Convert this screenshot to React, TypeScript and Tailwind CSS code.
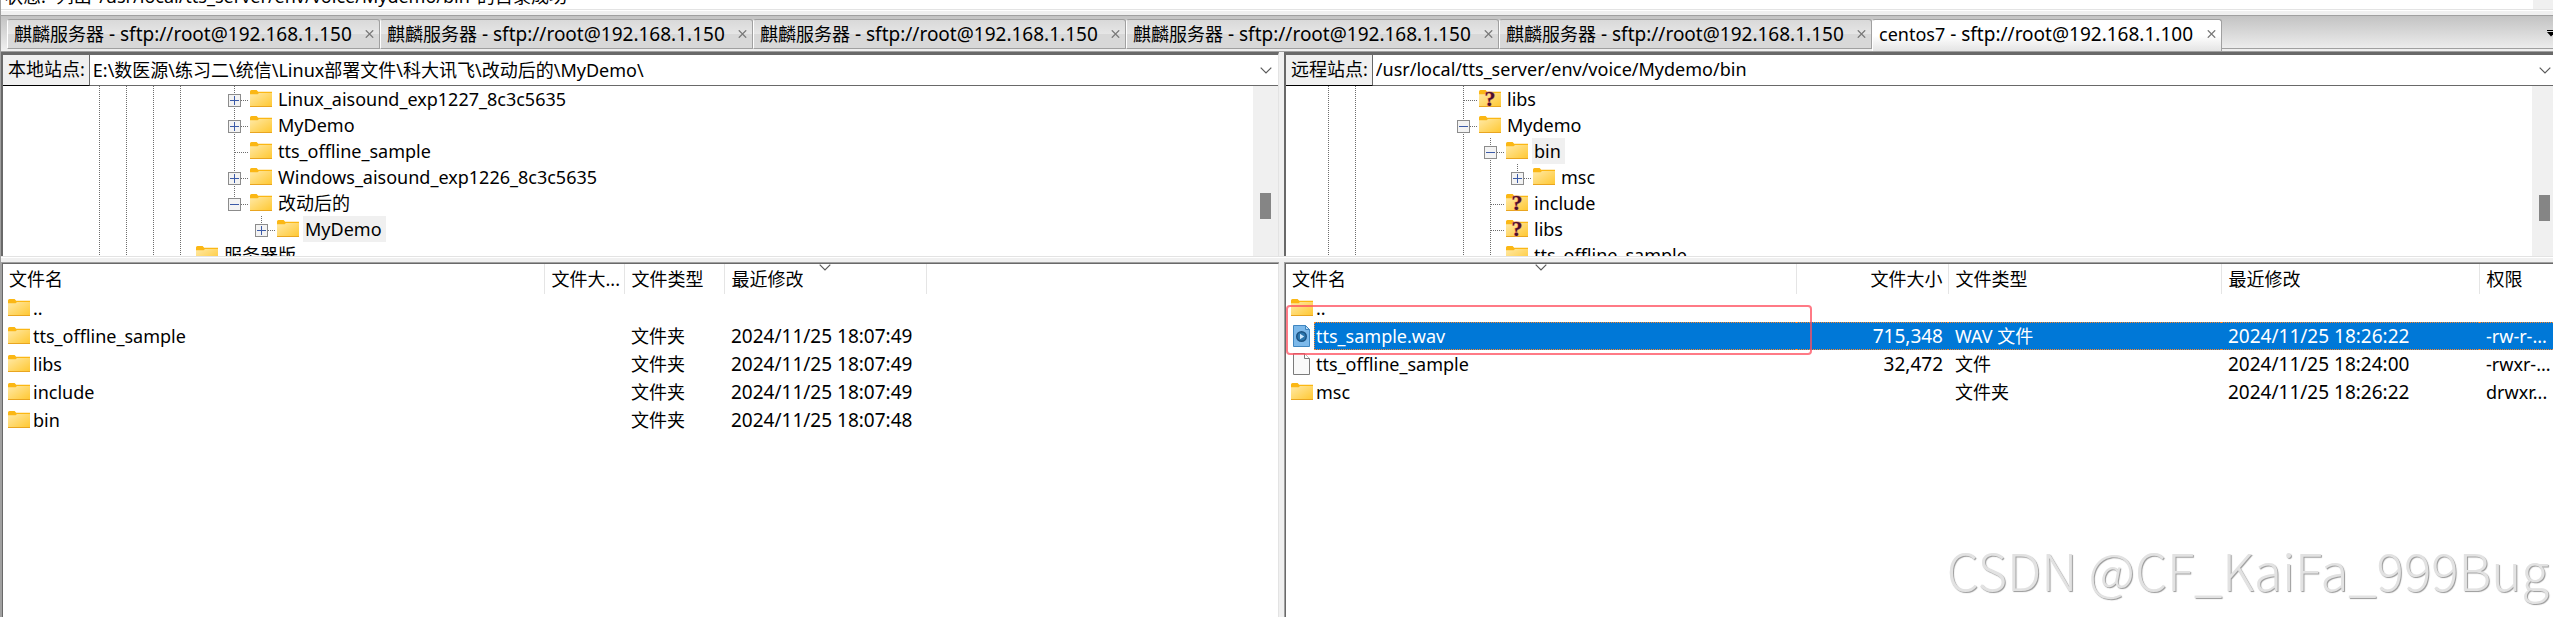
type NodeMark = "plus" | "minus" | "leaf";

interface TreeRow {
  // one character per indent level: "|" draws a guide line, "." leaves it empty
  guides: string;
  mark: NodeMark;
  name: string;
  last?: boolean;
  unknown?: boolean;
  selected?: boolean;
}

interface FileRow {
  icon: "folder" | "file" | "audio";
  name: string;
  size?: string;
  type?: string;
  modified?: string;
  permissions?: string;
  selected?: boolean;
}

interface Column {
  key: "name" | "size" | "type" | "modified" | "permissions";
  label: string;
  width: string;
  align?: "right";
  sorted?: boolean;
}

const TABS = [
  { id: 1, name: "麒麟服务器", url: "sftp://root@192.168.1.150" },
  { id: 2, name: "麒麟服务器", url: "sftp://root@192.168.1.150" },
  { id: 3, name: "麒麟服务器", url: "sftp://root@192.168.1.150" },
  { id: 4, name: "麒麟服务器", url: "sftp://root@192.168.1.150" },
  { id: 5, name: "麒麟服务器", url: "sftp://root@192.168.1.150" },
  { id: 6, name: "centos7", url: "sftp://root@192.168.1.100", active: true },
];

const LOCAL_TREE: TreeRow[] = [
  { guides: "...||||.", mark: "plus", name: "Linux_aisound_exp1227_8c3c5635" },
  { guides: "...||||.", mark: "plus", name: "MyDemo" },
  { guides: "...||||.", mark: "leaf", name: "tts_offline_sample" },
  { guides: "...||||.", mark: "plus", name: "Windows_aisound_exp1226_8c3c5635" },
  { guides: "...||||.", mark: "minus", name: "改动后的", last: true },
  { guides: "...||||..", mark: "plus", name: "MyDemo", last: true, selected: true },
  { guides: "...|||", mark: "leaf", name: "服务器版" },
];

const REMOTE_TREE: TreeRow[] = [
  { guides: ".||...", mark: "leaf", name: "libs", unknown: true },
  { guides: ".||...", mark: "minus", name: "Mydemo" },
  { guides: ".||...|", mark: "minus", name: "bin", selected: true },
  { guides: ".||...||", mark: "plus", name: "msc", last: true },
  { guides: ".||...|", mark: "leaf", name: "include", unknown: true },
  { guides: ".||...|", mark: "leaf", name: "libs", unknown: true },
  { guides: ".||...|", mark: "leaf", name: "tts_offline_sample" },
];

const LOCAL_COLUMNS: Column[] = [
  { key: "name", label: "文件名", width: "w-[541px]" },
  { key: "size", label: "文件大...", width: "w-[80px]", align: "right" },
  { key: "type", label: "文件类型", width: "w-[100px]" },
  { key: "modified", label: "最近修改", width: "w-[202px]", sorted: true },
];

const REMOTE_COLUMNS: Column[] = [
  { key: "name", label: "文件名", width: "w-[510px]", sorted: true },
  { key: "size", label: "文件大小", width: "w-[152px]", align: "right" },
  { key: "type", label: "文件类型", width: "w-[273px]" },
  { key: "modified", label: "最近修改", width: "w-[258px]" },
  { key: "permissions", label: "权限", width: "w-[80px]" },
];

const LOCAL_FILES: FileRow[] = [
  { icon: "folder", name: ".." },
  { icon: "folder", name: "tts_offline_sample", type: "文件夹", modified: "2024/11/25 18:07:49" },
  { icon: "folder", name: "libs", type: "文件夹", modified: "2024/11/25 18:07:49" },
  { icon: "folder", name: "include", type: "文件夹", modified: "2024/11/25 18:07:49" },
  { icon: "folder", name: "bin", type: "文件夹", modified: "2024/11/25 18:07:48" },
];

const REMOTE_FILES: FileRow[] = [
  { icon: "folder", name: ".." },
  {
    icon: "audio",
    name: "tts_sample.wav",
    size: "715,348",
    type: "WAV 文件",
    modified: "2024/11/25 18:26:22",
    permissions: "-rw-r-...",
    selected: true,
  },
  {
    icon: "file",
    name: "tts_offline_sample",
    size: "32,472",
    type: "文件",
    modified: "2024/11/25 18:24:00",
    permissions: "-rwxr-...",
  },
  {
    icon: "folder",
    name: "msc",
    type: "文件夹",
    modified: "2024/11/25 18:26:22",
    permissions: "drwxr...",
  },
];

const CELL_TEXT: Record<Column["key"], string> = {
  name: "text-[18px]",
  size: "text-[19px]",
  type: "text-[18px]",
  modified: "text-[19px]",
  permissions: "text-[18px]",
};

function FolderIcon({ unknown }: { unknown?: boolean }) {
  return (
    <svg width="22" height="18" viewBox="0 0 22 18" className="shrink-0" aria-hidden>
      <defs>
        <linearGradient id="folder-body" x1="0" y1="0" x2="1" y2="1">
          <stop offset="0" stopColor="#ffe9a6" />
          <stop offset="1" stopColor="#ffc72f" />
        </linearGradient>
      </defs>
      <path d="M0 1.5Q0 0 1.5 0H6.6L8.2 1.8H22V5H0Z" fill="#fbb714" />
      <path d="M0 4.2H7.6L9 3H22V17H0Z" fill="url(#folder-body)" />
      <rect x="0" y="16" width="22" height="1" fill="#e9a520" />
      {unknown && (
        <text
          x="11"
          y="16"
          textAnchor="middle"
          fill="#4b0f2e"
          stroke="#e58a6a"
          strokeWidth="1"
          paintOrder="stroke"
          className="font-['Liberation_Serif',serif] text-[22px] font-bold"
        >
          ?
        </text>
      )}
    </svg>
  );
}

function FileIcon() {
  return (
    <svg width="22" height="22" viewBox="0 0 22 22" className="shrink-0" aria-hidden>
      <path d="M2.5 0.5H13.5L18.5 5.5V21.5H2.5Z" fill="#f9f9f9" stroke="#7b7b7b" />
      <path d="M13.5 0.5V5.5H18.5" fill="#ffffff" stroke="#7b7b7b" />
    </svg>
  );
}

function AudioIcon() {
  return (
    <svg width="22" height="22" viewBox="0 0 22 22" className="shrink-0" aria-hidden>
      <path d="M2.5 0.5H14.5L18.5 4.5V21.5H2.5Z" fill="#7db9ea" stroke="#3f86c0" />
      <path d="M14.5 0.5V4.5H18.5Z" fill="#b5dbf7" stroke="#3f86c0" />
      <circle cx="10.5" cy="11.5" r="5.5" fill="#1c5382" />
      <circle cx="10.5" cy="11.5" r="4" fill="#2c76ad" />
      <path d="M9 8.8L13.2 11.5L9 14.2Z" fill="#cfeaff" />
    </svg>
  );
}

function Chevron() {
  return (
    <svg width="12" height="7" viewBox="0 0 12 7" aria-hidden>
      <path d="M0.7 0.7L6 6L11.3 0.7" fill="none" stroke="#5a5a5a" strokeWidth="1.2" />
    </svg>
  );
}

function Guide({ line }: { line: boolean }) {
  return (
    <svg
      width="27"
      height="26"
      viewBox="0 0 27 26"
      shapeRendering="crispEdges"
      className="shrink-0"
      aria-hidden
    >
      {line && <path d="M13.5 0V26" stroke="#6d6d6d" strokeDasharray="1 1" />}
    </svg>
  );
}

function Connector({ mark, last }: { mark: NodeMark; last?: boolean }) {
  return (
    <svg
      width="29"
      height="26"
      viewBox="0 0 29 26"
      shapeRendering="crispEdges"
      className="shrink-0"
      aria-hidden
    >
      <path d={last ? "M13.5 0V14" : "M13.5 0V26"} stroke="#6d6d6d" strokeDasharray="1 1" />
      <path d="M14 14.5H28" stroke="#6d6d6d" strokeDasharray="1 1" />
      {mark !== "leaf" && (
        <>
          <rect x="7.5" y="8.5" width="12" height="12" rx="1" fill="#f3f3f3" stroke="#8c8c8c" />
          <path d="M9 14.5H18" stroke="#3c5ba8" />
        </>
      )}
      {mark === "plus" && <path d="M13.5 10V19" stroke="#3c5ba8" />}
    </svg>
  );
}

function Tree({ rows, label, scrollbar }: { rows: TreeRow[]; label: string; scrollbar: string }) {
  return (
    <div className="flex h-[170px] overflow-hidden bg-white">
      <ul aria-label={label} className="min-w-0 flex-1">
        {rows.map((row, i) => (
          <li key={i} className="flex h-[26px] pl-[2px]">
            {row.guides.split("").map((g, level) => (
              <Guide key={level} line={g === "|"} />
            ))}
            {row.mark === "leaf" ? (
              <Connector mark={row.mark} last={row.last} />
            ) : (
              <button type="button" aria-label={row.name} aria-expanded={row.mark === "minus"}>
                <Connector mark={row.mark} last={row.last} />
              </button>
            )}
            <span className="flex items-center">
              <FolderIcon unknown={row.unknown} />
            </span>
            <span
              className={`ml-1 pr-1 pl-[2px] text-[18px] leading-[26px] ${row.selected ? "bg-[#f0f0f0]" : ""}`}
            >
              {row.name}
            </span>
          </li>
        ))}
      </ul>
      <div className={`shrink-0 bg-[#f0f0f0] pl-[7px] ${scrollbar}`}>
        <div className="h-[26px] w-[11px] bg-[#858585]" />
      </div>
    </div>
  );
}

interface SitePathProps {
  id: string;
  label: string;
  path: string;
  inset: string;
}

function SitePath({ id, label, path, inset }: SitePathProps) {
  return (
    <div className="flex h-[31px]">
      <label
        htmlFor={id}
        className="border-r border-b border-r-[#696969] border-b-black bg-[#f0f0f0] pr-1 pl-[5px] text-[18px] leading-[28px]"
      >
        {label}
      </label>
      <div
        className={`flex min-w-0 flex-1 items-center border-b border-[#696969] bg-white pl-[3px] ${inset}`}
      >
        <input
          id={id}
          defaultValue={path}
          className="h-[30px] min-w-0 flex-1 bg-transparent pb-[2px] text-[18px] outline-none"
        />
        <button type="button" aria-label={label}>
          <Chevron />
        </button>
      </div>
    </div>
  );
}

function FileList({ columns, rows }: { columns: Column[]; rows: FileRow[] }) {
  return (
    <table className="w-full table-fixed border-collapse text-left">
      <thead>
        <tr className="h-[30px]">
          {columns.map((col) => (
            <th
              key={col.key}
              className={`relative border-r border-[#e5e5e5] p-0 text-[18px] leading-[30px] font-normal ${col.width}`}
            >
              <div
                className={`overflow-hidden whitespace-nowrap ${col.key === "name" ? "pl-[6px]" : "pl-[7px]"} ${col.align === "right" ? "pr-[5px] text-right" : ""}`}
              >
                {col.label}
              </div>
              {col.sorted && (
                <span className="absolute inset-x-0 top-0 flex justify-center">
                  <Chevron />
                </span>
              )}
            </th>
          ))}
          {columns.length < 5 && <th className="p-0" />}
        </tr>
      </thead>
      <tbody>
        {rows.map((row) => {
          const fill = row.selected
            ? "border-y border-dotted border-[#ff8728] bg-[#0078d7] text-white leading-[26px]"
            : "leading-[28px]";
          return (
            <tr key={row.name} className="h-[28px]">
              {columns.map((col) =>
                col.key === "name" ? (
                  <td key={col.key} className="p-0 text-[18px]">
                    <div className="flex gap-px pl-[5px]">
                      <span className="flex items-center">
                        {row.icon === "folder" && <FolderIcon />}
                        {row.icon === "file" && <FileIcon />}
                        {row.icon === "audio" && <AudioIcon />}
                      </span>
                      <span
                        className={`h-[28px] flex-1 ${fill} ${row.selected ? "border-l pl-px" : "pl-[2px]"}`}
                      >
                        {row.name}
                      </span>
                    </div>
                  </td>
                ) : (
                  <td key={col.key} className={`p-0 ${CELL_TEXT[col.key]}`}>
                    <div
                      className={`h-[28px] overflow-hidden pl-[7px] whitespace-nowrap ${fill} ${col.align === "right" ? "pr-[5px] text-right" : ""}`}
                    >
                      {row[col.key]}
                    </div>
                  </td>
                ),
              )}
              {columns.length < 5 && <td className="p-0" />}
            </tr>
          );
        })}
      </tbody>
    </table>
  );
}

function HorizontalSash() {
  return (
    <div className="h-[6px] border-t border-[#e3e3e3] bg-[#f0f0f0]">
      <div className="h-px bg-white" />
    </div>
  );
}

export default function App() {
  return (
    <div className="relative flex min-h-screen flex-col overflow-hidden border-l border-[#a0a0a0] bg-white font-['Noto_Sans','Noto_Sans_CJK_SC',sans-serif] text-black">
      <div className="flex h-[9px] overflow-hidden">
        <div className="flex flex-1 items-end gap-[10px] pl-1 text-[18px] leading-[26px] whitespace-nowrap">
          <span>状态:</span>
          <span>列出"/usr/local/tts_server/env/voice/Mydemo/bin"的目录成功</span>
        </div>
        <div className="w-[20px] bg-[#f0f0f0]" />
      </div>
      <HorizontalSash />

      <nav className="flex h-[36px] items-start border-t border-[#a0a0a0] bg-linear-to-b from-[#c3c3c3] to-[#f0f0f0] pt-[3px] pl-[6px]">
        {TABS.map((tab) => (
          <div
            key={tab.id}
            className={`flex items-center justify-between rounded-t-[3px] border-t border-r border-l border-[#a0a0a0] border-l-white pr-[5px] pl-[6px] ${
              tab.active
                ? "h-[32px] w-[350px] bg-linear-to-b from-white from-50% to-[#e4e4e4] pb-[3px]"
                : "h-[30px] w-[373px] border-b bg-linear-to-b from-[#d9d9d9] via-[#e6e6e6] via-50% to-[#d8d8d8] to-50%"
            }`}
          >
            <button type="button" className="leading-[28px] whitespace-pre">
              <span className="text-[18px]">{tab.name}</span>
              <span className="text-[19px]"> - {tab.url}</span>
            </button>
            <button type="button" aria-label={`关闭 ${tab.name}`}>
              <svg width="9" height="8" viewBox="0 0 9 8" aria-hidden>
                <path d="M0.8 0.3L8.2 7.7M8.2 0.3L0.8 7.7" stroke="#7a7a7a" strokeWidth="1.3" />
              </svg>
            </button>
          </div>
        ))}
        <div className="flex h-[30px] flex-1 items-center justify-end border-b border-[#a0a0a0]">
          <button type="button" aria-label="标签页列表">
            <svg width="6" height="7" viewBox="0 0 6 7" aria-hidden>
              <path d="M0 0.5H6" stroke="#000000" />
              <path d="M0 2H6V4.5L4 6.5Z" fill="#000000" />
            </svg>
          </button>
        </div>
      </nav>

      <main className="grid flex-1 grid-cols-[1283fr_1269fr]">
        <section className="flex min-w-0 flex-col border-t border-[#a0a0a0]">
          <div className="flex border-r-[5px] border-[#f0f0f0]">
            <div className="min-w-0 flex-1 border-t-[3px] border-r border-l-2 border-t-[#696969] border-r-[#e3e3e3] border-l-[#696969]">
              <SitePath
                id="local-path"
                label="本地站点:"
                path="E:\数医源\练习二\统信\Linux部署文件\科大讯飞\改动后的\MyDemo\"
                inset="pr-[6px]"
              />
              <Tree rows={LOCAL_TREE} label="本地目录" scrollbar="w-[25px] pt-[107px]" />
            </div>
          </div>
          <HorizontalSash />
          <div className="flex flex-1 border-r-[5px] border-[#f0f0f0]">
            <div className="min-w-0 flex-1 border-t border-l border-[#a0a0a0]">
              <div className="h-full border-t border-r border-l border-[#696969] border-r-[#e3e3e3]">
                <FileList columns={LOCAL_COLUMNS} rows={LOCAL_FILES} />
              </div>
            </div>
          </div>
        </section>

        <section className="flex min-w-0 flex-col border-t border-[#a0a0a0]">
          <div className="border-t-[3px] border-l-2 border-[#696969]">
            <SitePath
              id="remote-path"
              label="远程站点:"
              path="/usr/local/tts_server/env/voice/Mydemo/bin"
              inset="pr-[2px]"
            />
            <Tree rows={REMOTE_TREE} label="远程目录" scrollbar="w-[21px] pt-[109px]" />
          </div>
          <HorizontalSash />
          <div className="flex-1 border-t border-l border-[#a0a0a0]">
            <div className="relative h-full border-t border-l border-[#696969]">
              <FileList columns={REMOTE_COLUMNS} rows={REMOTE_FILES} />
              <div className="pointer-events-none absolute top-[41px] left-0 h-[50px] w-[526px] rounded border-2 border-[#ff4d5e]/75" />
            </div>
          </div>
        </section>
      </main>

      <p className="absolute right-1 bottom-5 font-['Noto_Sans_CJK_SC',sans-serif] text-[51px] leading-[56px] font-light text-[#e2e2e2] [text-shadow:1px_1px_1px_#999999]">
        CSDN @CF_KaiFa_999Bug
      </p>
    </div>
  );
}
